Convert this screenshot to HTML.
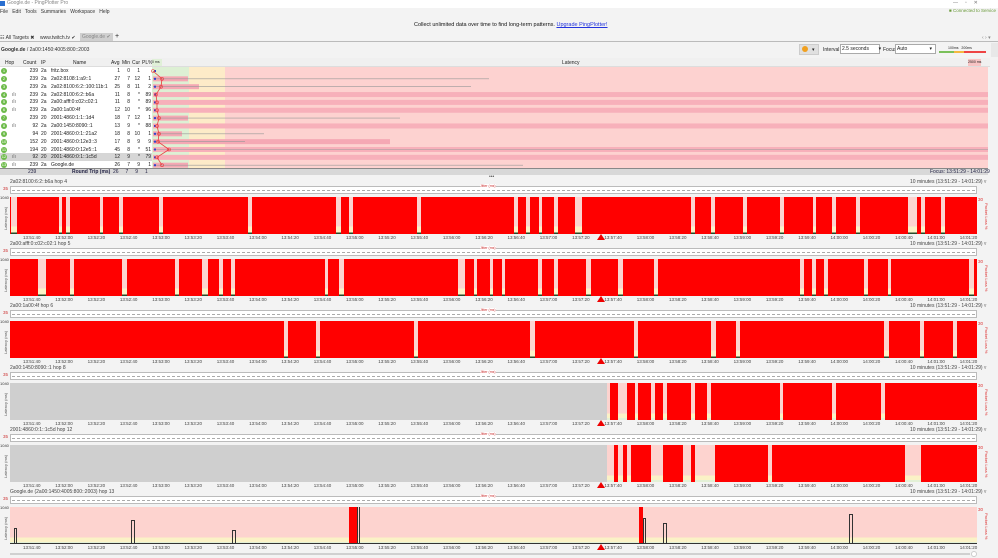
<!DOCTYPE html>
<html><head><meta charset="utf-8">
<style>
*{box-sizing:border-box;margin:0;padding:0}
body{width:998px;height:558px;overflow:hidden;background:#f3f3f3;font-family:"Liberation Sans",sans-serif;font-size:5px;color:#222;position:relative}
.a{position:absolute;white-space:nowrap}
.t{font-size:5px;line-height:6px}
.row{position:absolute;left:0;width:152px;height:8px;font-size:5px;line-height:8px;background:#fff}
.row span{position:absolute}
.hop{left:1px;top:1px;width:6px;height:6px;border-radius:50%;background:#6dbb4a;color:#fff;font-size:4px;line-height:6px;text-align:center}
</style></head><body>
<div class="a" style="left:0;top:0;width:998px;height:8px;background:#fff"></div>
<div class="a" style="left:0;top:1px;width:5px;height:5px;background:#2a6fd0"></div>
<div class="a t" style="left:7px;top:0;color:#888">Google.de - PingPlotter Pro</div>
<div class="a t" style="left:953px;top:0;color:#777">—&nbsp;&nbsp;&nbsp;&nbsp;&nbsp;▫&nbsp;&nbsp;&nbsp;&nbsp;&nbsp;✕</div>
<div class="a t" style="left:0;top:9px;color:#333">File&nbsp;&nbsp; Edit&nbsp;&nbsp; Tools&nbsp;&nbsp; Summaries&nbsp;&nbsp; Workspace&nbsp;&nbsp; Help</div>
<div class="a t" style="left:949px;top:8px;color:#6a9a3a;font-size:4.5px">■ Connected to Service</div>
<div class="a" style="left:414px;top:22px;font-size:5.5px;color:#111">Collect unlimited data over time to find long-term patterns. <span style="color:#2233dd;text-decoration:underline">Upgrade PingPlotter!</span></div>
<div class="a t" style="left:0;top:35px;color:#333">☷ All Targets ✖&nbsp;&nbsp;&nbsp; www.twitch.tv ✔</div>
<div class="a t" style="left:80px;top:33px;width:33px;height:9px;background:#cfcfcf;color:#888;padding:1px 2px">Google.de ✔</div>
<div class="a t" style="left:115px;top:34px;font-size:7px">+</div>
<div class="a t" style="left:982px;top:35px;color:#888">‹ › ▾</div>
<div class="a" style="left:0;top:41px;width:998px;height:1px;background:#bbb"></div>
<div class="a t" style="left:1px;top:47px;color:#333"><b>Google.de</b> / 2a00:1450:4005:800::2003</div>
<div class="a" style="left:799px;top:44px;width:20px;height:11px;background:#e0e0e0;border:1px solid #ccc"></div>
<div class="a" style="left:802px;top:46px;width:6px;height:6px;border-radius:50%;background:#f0a020"></div>
<div class="a t" style="left:812px;top:47px">▾</div>
<div class="a t" style="left:823px;top:47px">Interval</div>
<div class="a t" style="left:840px;top:44px;width:40px;height:10px;background:#fff;border:1px solid #aaa;padding:1px 1px">2.5 seconds&nbsp;&nbsp;&nbsp;&nbsp;&nbsp;&nbsp;&nbsp;▾</div>
<div class="a t" style="left:883px;top:47px">Focus</div>
<div class="a t" style="left:895px;top:44px;width:41px;height:10px;background:#fff;border:1px solid #aaa;padding:1px 1px">Auto&nbsp;&nbsp;&nbsp;&nbsp;&nbsp;&nbsp;&nbsp;&nbsp;&nbsp;&nbsp;&nbsp;&nbsp;&nbsp;&nbsp;&nbsp;&nbsp;▾</div>
<div class="a" style="left:939px;top:51px;width:15px;height:2px;background:#7bc05a"></div>
<div class="a" style="left:954px;top:51px;width:10px;height:2px;background:#f5b840"></div>
<div class="a" style="left:964px;top:51px;width:22px;height:2px;background:#ee4444"></div>
<div class="a" style="left:948px;top:46px;font-size:3.5px">100ms&nbsp;&nbsp;&nbsp;200ms</div>
<div class="a" style="left:991px;top:43px;width:7px;height:14px;background:#e8e8e8"></div>
<div class="a" style="left:0;top:58px;width:990px;height:9px;background:#f0f0f0;border-bottom:1px solid #ddd"></div>
<div class="a t" style="left:5px;top:60px">Hop</div>
<div class="a t" style="left:23px;top:60px">Count</div>
<div class="a t" style="left:41px;top:60px">IP</div>
<div class="a t" style="left:73px;top:60px">Name</div>
<div class="a t" style="left:111px;top:60px">Avg</div>
<div class="a t" style="left:122px;top:60px">Min</div>
<div class="a t" style="left:132px;top:60px">Cur</div>
<div class="a t" style="left:142px;top:60px">PL%</div>
<div class="a" style="left:152px;top:59px;width:10px;height:7px;font-size:3.5px;line-height:7px;background:#e0f0d8">0 ms</div>
<div class="a t" style="left:562px;top:60px">Latency</div>
<div class="a" style="left:968px;top:59px;font-size:3.5px;line-height:7px;background:#f8c4c4">2500 ms</div>
<div class="a" style="left:152px;top:67px;width:37px;height:102px;background:#ddf0d4"></div>
<div class="a" style="left:189px;top:67px;width:36px;height:102px;background:#fdebc8"></div>
<div class="a" style="left:225px;top:67px;width:763px;height:102px;background:#fdd2d0"></div>
<div id="rows"></div>
<svg class="a" style="left:0;top:0" width="998" height="180" id="lat"></svg>
<div class="a" style="left:0;top:168px;width:988px;height:7px;background:#d8d8d8;border-top:1px solid #888"></div>
<div class="a t" style="left:28px;top:169px;color:#224">239</div>
<div class="a t" style="left:72px;top:169px;color:#224"><b>Round Trip (ms)</b></div>
<div class="a t" style="left:113px;top:169px;color:#224">26&nbsp;&nbsp;&nbsp;&nbsp; 7&nbsp;&nbsp;&nbsp;&nbsp; 9&nbsp;&nbsp;&nbsp;&nbsp; 1</div>
<div class="a t" style="left:930px;top:169px;color:#224">Focus: 13:51:29 - 14:01:29</div>
<div class="a t" style="left:489px;top:174px;color:#555">•••</div>
<div id="panels"></div>
<div class="a" style="left:10px;top:553px;width:960px;height:2px;background:#d0d0d0"></div>
<div class="a" style="left:971px;top:551px;width:6px;height:6px;border-radius:50%;background:#fff;border:1px solid #ccc"></div>
<script>
(function(){
var rows=[
[1,"",239,"2a","fritz.box",1,0,1,"",0,0,0],
[2,"",239,"2a","2a02:8108:1:a9::1",27,7,12,1,188,489,0],
[3,"",239,"2a","2a02:8100:6:2::100:11b:1",25,8,11,2,199,471,0],
[4,"ılı",239,"2a","2a02:8100:6:2::b6a",11,8,"*",89,0,0,1],
[5,"ılı",239,"2a","2a00:afff:0:c02:c02:1",11,8,"*",89,0,0,1],
[6,"ılı",239,"2a","2a00:1a00:4f",12,10,"*",96,0,0,1],
[7,"",239,"20","2001:4860:1:1::1d4",18,7,12,1,188,400,0],
[8,"ılı",92,"2a","2a00:1450:8090::1",13,9,"*",88,0,0,1],
[9,"",94,"20","2001:4860:0:1::21a2",18,8,10,1,182,264,0],
[10,"",152,"20","2001:4860:0:12e3::3",17,8,9,9,390,245,0],
[11,"",194,"20","2001:4860:0:12e5::1",45,8,"*",51,0,988,1],
[12,"ılı",92,"20","2001:4860:0:1::1c5d",12,9,"*",79,0,0,1],
[13,"ılı",239,"2a","Google.de",26,7,9,1,188,523,0]];
var h="",s="",pts=[153,162,161,156,157,157,159,157,159,158,169,157,162],pl="";
rows.forEach(function(r,i){var y=67+i*7.85;var bg=i==11?"#d6d6d6":"#fff";
h+='<div class="row" style="top:'+y+'px;background:'+bg+'"><span class="hop">'+r[0]+'</span><span style="left:12px;color:#666">'+r[1]+'</span><span style="right:114px">'+r[2]+'</span><span style="left:41px">'+r[3]+'</span><span style="left:51px">'+r[4]+'</span><span style="right:32px">'+r[5]+'</span><span style="right:22px">'+r[6]+'</span><span style="right:12px">'+r[7]+'</span><span style="right:1px">'+r[8]+'</span></div>';
if(r[11])s+='<rect x="153" y="'+(y+1.5)+'" width="835" height="5" fill="#f7b0ba"/>';
if(r[9])s+='<rect x="153" y="'+(y+1.5)+'" width="'+(r[9]-153)+'" height="5" fill="#f5a8b4"/>';
if(r[10])s+='<line x1="153" x2="'+r[10]+'" y1="'+(y+4)+'" y2="'+(y+4)+'" stroke="#999" stroke-width="0.6"/>';
s+='<rect x="154" y="'+(y+3)+'" width="2" height="2" fill="#3344cc"/>';
pl+=pts[i]+','+(y+4)+' ';});
s+='<polyline points="'+pl+'" fill="none" stroke="#e84040" stroke-width="0.8"/>';
pts.forEach(function(p,i){s+='<circle cx="'+p+'" cy="'+(71+i*7.85)+'" r="1.5" fill="none" stroke="#e84040" stroke-width="0.6"/>';});
document.getElementById("rows").innerHTML=h;document.getElementById("lat").innerHTML=s;
var titles=["2a02:8100:6:2::b6a hop 4","2a00:afff:0:c02:c02:1 hop 5","2a00:1a00:4f hop 6","2a00:1450:8090::1 hop 8","2001:4860:0:1::1c5d hop 12","Google.de (2a00:1450:4005:800::2003) hop 13"];
var gaps=[
[[11,16.5],[58.5,62.4],[66,70],[100,103],[119,123],[159,163],[248,252],[336,340.5],[349,352.6],[417,421],[514,518],[526,530],[538.5,542],[554,558],[575,582],[691,695],[711,715],[743,747],[780,784],[813,816],[832,836],[856,860],[908,917],[921,925],[941,945]],
[[38,46],[70,74],[122,127],[175,179],[202,207.5],[219,223],[231,235],[325,328],[339,344],[458,465],[473.5,477],[489.5,493],[501.5,505],[538,542],[554,558],[586,591],[618,622.5],[654,658],[799.5,804],[812,816],[823.6,827.6],[864,868],[888,891],[969,974]],
[[284,288],[316,320],[414,417.5],[530,535],[634,638],[711,716],[736,740],[884,888.5],[920,924],[953,957]]];
var reds=[[[610,618],[627,635],[638,651],[655,663],[667,691],[695,707],[711,780],[783,832],[836,881],[885,977]],
[[614,618],[623,627],[631,651],[663,683],[691,695],[715,768],[772,905],[921,977]]];
var P="";var L=10,R=977,W=R-L;
for(var k=0;k<6;k++){var T=180+k*62;var g='';
g+='<div class="a t" style="left:10px;top:'+(T-1)+'px;color:#444">'+titles[k]+'</div>';
g+='<div class="a t" style="left:910px;top:'+(T-1)+'px;color:#444">10 minutes (13:51:29 - 14:01:29) ▿</div>';
g+='<div class="a" style="left:10px;top:'+(T+6)+'px;width:967px;height:8px;background:#fff;border:1px solid #bbb"></div>';
g+='<div class="a" style="left:12px;top:'+(T+10)+'px;width:963px;border-top:1px dashed #aaa"></div>';
g+='<div class="a" style="left:3px;top:'+(T+6)+'px;font-size:4.5px;color:#c33">35</div>';
g+='<div class="a" style="left:480px;top:'+(T+4)+'px;font-size:3.5px;color:#c33;background:#fff">Jitter (ms)</div>';
g+='<div class="a" style="left:0;top:'+(T+15)+'px;font-size:4px;color:#333">1040</div>';
g+='<div class="a" style="left:3px;top:'+(T+50)+'px;font-size:4px;color:#555;transform:rotate(-90deg);transform-origin:0 0">Latency (ms)</div>';
g+='<div class="a" style="left:978px;top:'+(T+17)+'px;font-size:4.5px;color:#d33">30</div>';
g+='<div class="a" style="left:989px;top:'+(T+23)+'px;font-size:4px;color:#d33;transform:rotate(90deg);transform-origin:0 0">Packet Loss %</div>';
var tp=T+17,H=37,inner='';
if(k<3){inner+='<div class="a" style="left:0;top:0;width:'+W+'px;height:'+H+'px;background:#ff0000"></div>';
gaps[k].forEach(function(q){inner+='<div class="a" style="left:'+(q[0]-L)+'px;top:0;width:'+(q[1]-q[0])+'px;height:'+H+'px;background:linear-gradient(#fcd4d0 80%,#fbf3c8 80%,#fbf3c8 96%,#2a4a2a 96%)"></div>';});}
else if(k<5){inner+='<div class="a" style="left:0;top:0;width:'+W+'px;height:'+H+'px;background:linear-gradient(#fdd3cf 82%,#fbf2c6 82%,#fbf2c6 94%,#e3f0d6 94%)"></div>';
inner+='<div class="a" style="left:0;top:0;width:'+(607-L)+'px;height:'+H+'px;background:#cfcfcf"></div>';
reds[k-3].forEach(function(q){inner+='<div class="a" style="left:'+(q[0]-L)+'px;top:0;width:'+(q[1]-q[0])+'px;height:'+H+'px;background:#ff0000"></div>';});}
else{inner+='<div class="a" style="left:0;top:0;width:'+W+'px;height:'+H+'px;background:linear-gradient(#fdd3cf 82%,#fbf2c6 82%,#fbf2c6 94%,#e3f0d6 94%)"></div>';
[[349,357],[639,643]].forEach(function(q){inner+='<div class="a" style="left:'+(q[0]-L)+'px;top:0;width:'+(q[1]-q[0])+'px;height:'+H+'px;background:#ff0000"></div>';});
[[14,17,528],[131,135,520],[232,236,530],[357,360,504],[643,646,518],[663,667,523],[849,853,514]].forEach(function(q){inner+='<div class="a" style="left:'+(q[0]-L)+'px;top:'+(q[2]-tp)+'px;width:'+(q[1]-q[0])+'px;height:'+(tp+H-q[2])+'px;border:1px solid #333;border-bottom:0"></div>';});
inner+='<div class="a" style="left:0;top:'+(H-1)+'px;width:'+W+'px;height:1px;background:#333"></div>';}
g+='<div class="a" style="left:'+L+'px;top:'+tp+'px;width:'+W+'px;height:'+H+'px;overflow:hidden">'+inner+'</div>';
var lab="";for(var j=0;j<30;j++){var sec=(51*60+40)+j*20;var m=Math.floor(sec/60),ss=sec%60;var hh=13;if(m>=60){hh=14;m-=60;}
var txt=hh+":"+(m<10?"0":"")+m+":"+(ss<10?"0":"")+ss;lab+='<div class="a" style="left:'+(23+j*32.3)+'px;top:'+(T+55)+'px;font-size:4.5px;color:#444">'+txt+'</div>';}
g+=lab;
g+='<div class="a" style="left:597px;top:'+(T+54)+'px;width:0;height:0;border-left:4px solid transparent;border-right:4px solid transparent;border-bottom:6px solid #e00"></div>';
P+=g;}
document.getElementById("panels").innerHTML=P;
})();
</script>
</body></html>
